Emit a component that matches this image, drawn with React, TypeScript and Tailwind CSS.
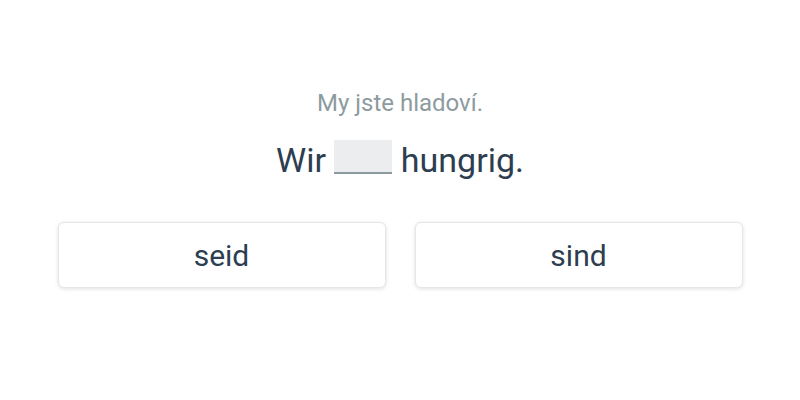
import React from "react";

const options = ["seid", "sind"];

export default function App() {
  return (
    <div className="w-[800px] h-[400px] bg-white flex flex-col items-center font-['Roboto',sans-serif]">
      <p className="mt-[87px] text-[24px] leading-[32px] text-[#8d9b9f]">My jste hladoví.</p>
      <p className="mt-[21px] text-[34px] leading-[40px] text-[#2c3e50]">
        Wir{" "}
        <span className="inline-block w-[58px] h-[34px] align-[-2px] bg-[#ecedef] border-b-2 border-[#8a9a9e]"></span>{" "}
        hungrig.
      </p>
      <div className="mt-[42px] flex gap-[29px]">
        {options.map((o) => (
          <button
            key={o}
            className="w-[328px] h-[66px] rounded-[6px] bg-white border border-[#e4e6e8] shadow-[0_1px_4px_rgba(0,0,0,0.12)] text-[30px] text-[#2c3e50]"
          >
            {o}
          </button>
        ))}
      </div>
    </div>
  );
}
